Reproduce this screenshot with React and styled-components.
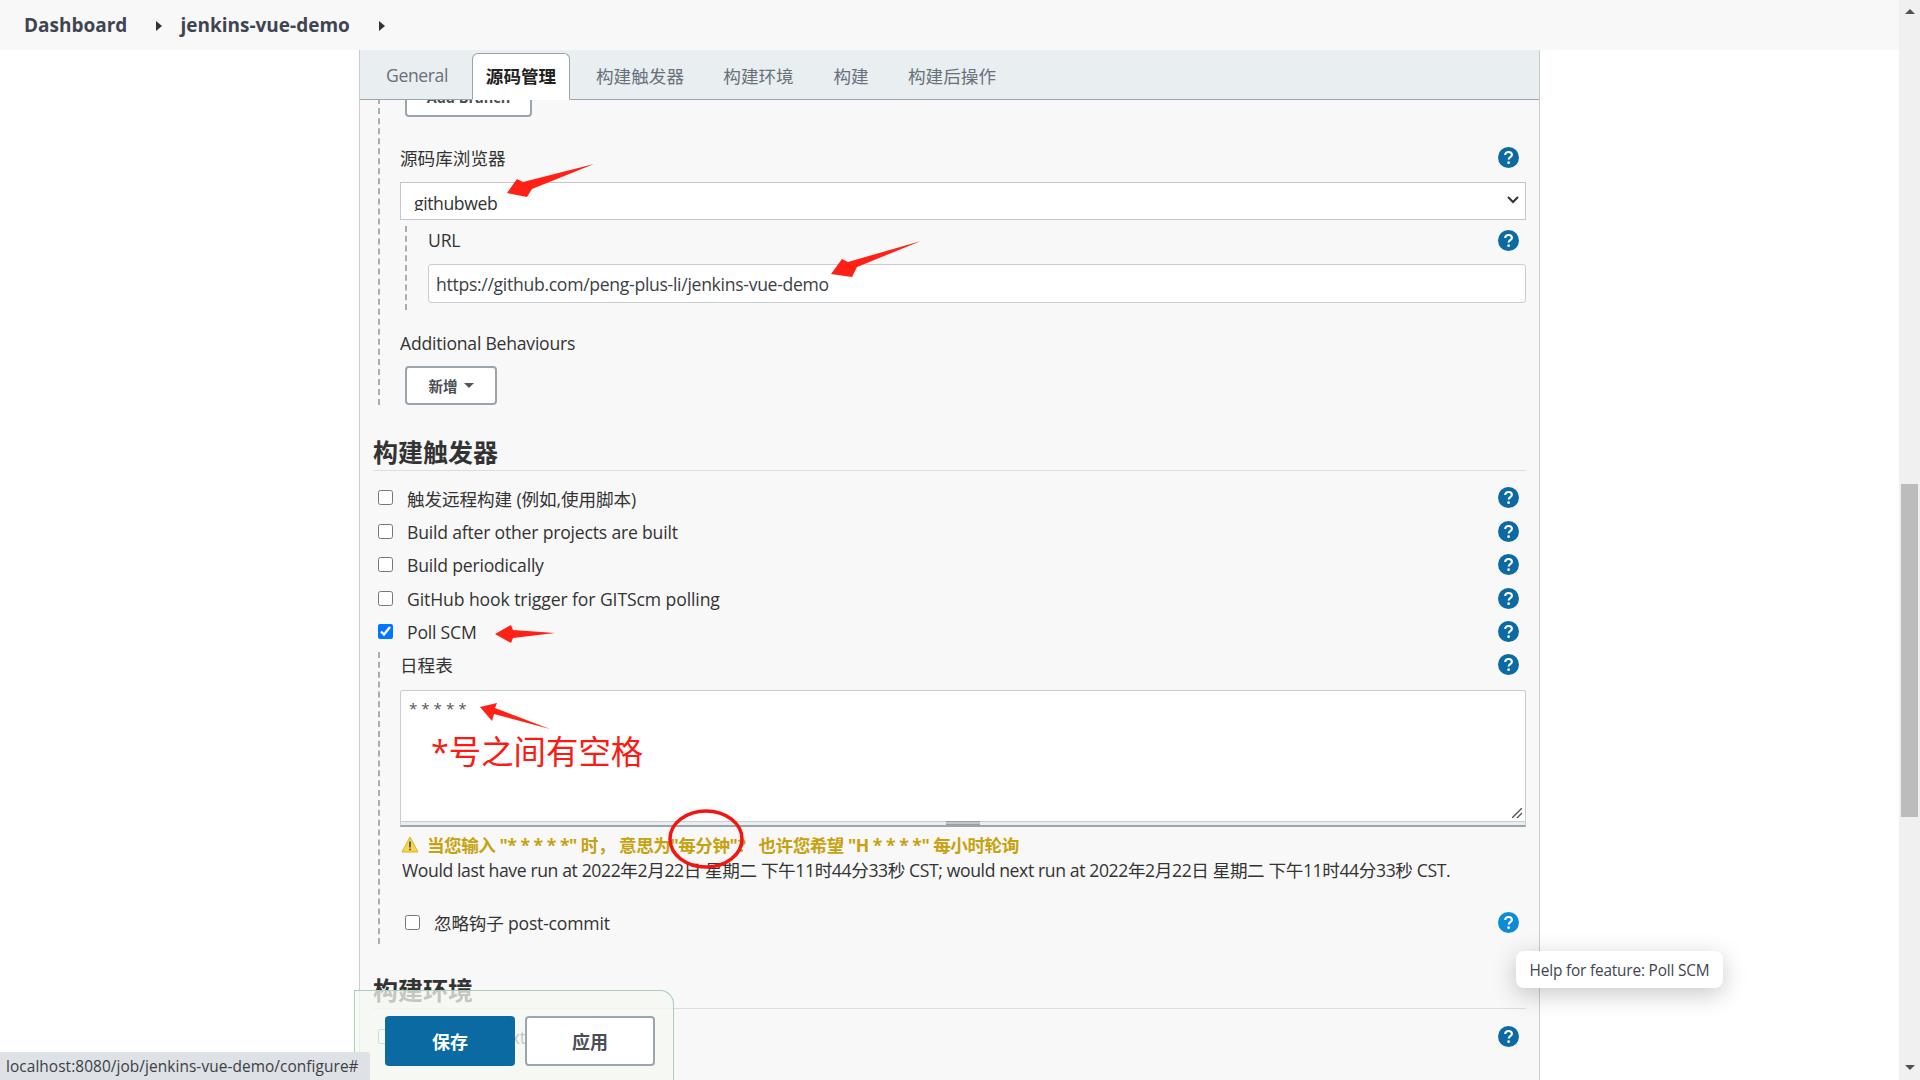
import React from 'react';
import styled, { createGlobalStyle } from 'styled-components';

const Global = createGlobalStyle`
  html, body { margin: 0; padding: 0; height: 100%; overflow: hidden; background: #fff; }
  body { font-family: "Open Sans", "Noto Sans CJK SC", sans-serif; font-size: 17.6px; color: #333; }
  * { box-sizing: border-box; }
`;

const Page = styled.div`
  position: relative; width: 1920px; height: 1080px; overflow: hidden;
  display: grid; grid-template-columns: 1fr 21px;
`;
const Main = styled.div`display: flex; flex-direction: column; height: 1080px; min-width: 0;`;
const TopBar = styled.header`
  flex: none; height: 50px; background: #f8f8f8; display: flex; align-items: center; padding-left: 24px;
`;
const Crumb = styled.a`font-weight: 700; font-size: 19px; color: #3f4550; letter-spacing: 0;`;
const CrumbCaret = styled.svg`width: 6px; height: 10px; fill: #333; margin: 1px ${p => p.$r}px 0 ${p => p.$l}px;`;

const Body = styled.div`flex: 1; min-height: 0; padding-left: 359px;`;
const Panel = styled.main`
  width: 1181px; height: 100%; background: #f8f8f8; border: solid #ccc; border-width: 0 1px;
  display: flex; flex-direction: column; overflow: hidden;
`;
const Tabs = styled.nav`
  flex: none; height: 50px; background: #e9eef1; border-bottom: 1px solid #9aa5ae; display: flex; align-items: flex-end; position: relative;
`;
const Tab = styled.a`
  height: 47px; margin-bottom: -1px; padding-bottom: 3px; display: flex; align-items: center; justify-content: center; white-space: nowrap;
  width: ${p => p.$w}px; margin-left: ${p => p.$m}px; color: ${p => p.$active ? '#222' : '#68707a'};
  font-weight: ${p => p.$active ? 700 : 400}; letter-spacing: ${p => p.$ls || 0}px;
  ${p => p.$active ? 'background:#fff;border:1px solid #9aa5ae;border-bottom:1px solid #fff;border-radius:6px 6px 0 0;' : ''}
`;
const Scroller = styled.div`flex: 1; min-height: 0; overflow: hidden;`;
const Content = styled.div`margin-top: -22px; padding: 0 13px 0 13px;`;
const Dashed = styled.div`
  margin-left: 5px; border-left: 2px dashed #a9adb1; padding-left: 20px;
  padding-bottom: ${p => p.$pb || 0}px; margin-top: ${p => p.$mt || 0}px;
`;
const Nested = styled.div`
  margin: 6px 0 0 5px; border-left: 2px dashed #a9adb1; padding: 0 0 7px 21px;
`;
const OutlineBtn = styled.button`
  display: flex; align-items: center; justify-content: center; gap: 6px;
  height: 39px; width: ${p => p.$w}px; margin-left: 5px; margin-top: ${p => p.$mt || 0}px;
  background: #fff; border: 2px solid #9aa5ae; border-radius: 4px; font: 700 14.5px "Open Sans", "Noto Sans CJK SC", sans-serif; color: #4a4f55; padding: 0;
`;
const Caret = styled.span`
  width: 0; height: 0; border: 5px solid transparent; border-top-color: #555; border-bottom: 0;
`;
const LabelRow = styled.div`
  display: flex; align-items: center; justify-content: space-between; height: ${p => p.$h || 30}px;
  margin-top: ${p => p.$mt || 0}px; padding-right: 7px; letter-spacing: ${p => p.$ls || 0}px;
`;
const SelectBox = styled.div`
  height: 38px; margin-top: 10px; background: #fff; border: 1px solid #c4c6c8; position: relative; padding: 9px 0 0 13px;
`;
const SelectValue = styled.span`display: block; height: 19px; overflow: hidden; line-height: 22px; width: 100px; letter-spacing: -0.4px;`;
const Chevron = styled.svg`position: absolute; right: 6px; top: 13px; width: 12px; height: 8px; fill: none; stroke: #333; stroke-width: 2;`;
const TextInput = styled.div`
  height: 39px; margin-top: 10px; background: #fff; border: 1px solid #c9cdd0; border-radius: 3px; display: flex; align-items: center; padding-left: 7px; letter-spacing: -0.3px; color: #3a3f46;
`;
const SectionTitle = styled.h2`
  margin: ${p => p.$mt}px 0 0; height: 35px; font-size: 25px; line-height: 32px; font-weight: 700; color: #333; border-bottom: 1px solid #ddd;
`;
const Rows = styled.div`margin-top: ${p => p.$mt || 10}px;`;
const Row = styled.div`
  display: flex; align-items: center; height: ${p => p.$h || 33.5}px; padding-left: ${p => p.$pl ?? 5}px; padding-right: 7px; color: #333;
`;
const Check = styled.input`width: 15px; height: 15px; margin: 0 14px 0 0; flex: none; accent-color: #0075ff;`;
const RowLabel = styled.span`flex: 1; padding-top: 1px; letter-spacing: ${p => p.$ls ?? -0.2}px; white-space: nowrap;`;
const Schedule = styled.div`margin-top: 13px; position: relative;`;
const CronArea = styled.textarea`
  display: block; width: 100%; height: 131px; background: #fff; border: 1px solid #c9cdd0; border-bottom: 0; border-radius: 3px 3px 0 0; padding: 7px 8px;
  font: 15.2px/20px "Open Sans", sans-serif; color: #555; resize: none; outline: none;
`;
const ResizeMark = styled.svg`
  position: absolute; right: 4px; bottom: 9px; width: 10px; height: 10px; stroke: #555; stroke-width: 1.4; fill: none; pointer-events: none;
`;
const Grippie = styled.div`
  height: 6px; background: #e9eef1; border: 1px solid #c9cdd0; border-top: 1px solid #c9cdd0; border-bottom: 2px solid #9aa5ae; display: flex; justify-content: center;
`;
const Grip = styled.span`width: 34px; height: 4px; margin-top: -1px; border-top: 1px solid #9a9fa3; border-bottom: 1px solid #9a9fa3; background: #c3c6c8;`;
const Warning = styled.div`
  height: 24px; margin-top: 5px; display: flex; align-items: center; gap: 8px; margin-left: 1px; font-weight: 700; color: #c7a20f; letter-spacing: -0.5px; white-space: nowrap;
`;
const NextRun = styled.div`height: 24px; margin: 2px 0 0 2px; line-height: 24px; white-space: nowrap; letter-spacing: -0.39px; color: #333;`;

const ScrollBar = styled.aside`background: #f0f0f0; position: relative; display: flex; flex-direction: column; align-items: center;`;
const ScrollArrow = styled.span`
  width: 0; height: 0; border: 5px solid transparent; margin-top: ${p => p.$mt}px; ${p => p.$up ? 'border-bottom-color:#505050;border-top:0;' : 'border-top-color:#505050;border-bottom:0;'}
`;
const Thumb = styled.div`width: 17px; height: 333px; margin-top: 470px; background: #bcbcbc; flex: none;`;

const Tooltip = styled.div`
  position: absolute; left: 1516px; top: 951px; width: 207px; height: 37px; padding-top: 1px; background: #fff; border-radius: 8px;
  box-shadow: 0 6px 24px rgba(0,0,0,.22); display: flex; align-items: center; justify-content: center; font-size: 15.4px; color: #3f4550; letter-spacing: -0.18px; white-space: nowrap;
`;
const StatusBar = styled.div`
  position: absolute; left: 0; bottom: 0; width: 370px; height: 28px; background: #dee1e6; border-radius: 0 3px 0 0; padding-left: 6px; line-height: 30px; font-size: 15.4px; color: #3c4043; white-space: nowrap; letter-spacing: 0.08px;
`;
const BottomBar = styled.div`
  position: absolute; left: 354px; top: 990px; width: 320px; height: 90px; background: rgba(245,248,243,.75); border: 1px solid #a9cdb6; border-bottom: 0; border-radius: 0 14px 0 0;
  display: flex; gap: 10px; padding: 25px 0 0 30px; align-items: flex-start;
`;
const SaveBtn = styled.button`
  width: 130px; height: 50px; border: 0; border-radius: 4px; background: #0b6aa2; color: #fff; font: 700 18px "Open Sans", "Noto Sans CJK SC", sans-serif;
`;
const ApplyBtn = styled.button`
  width: 130px; height: 50px; border: 2px solid #9aa5ae; border-radius: 4px; background: #fff; color: #4a4f55; font: 700 18px "Open Sans", "Noto Sans CJK SC", sans-serif;
`;
const Marks = styled.svg`position: absolute; left: 0; top: 0; width: 1920px; height: 1080px; pointer-events: none;`;
const RedNote = styled.div`
  position: absolute; left: 431px; top: 727px; font-size: 32.4px; line-height: 48px; color: #fb1a14; white-space: nowrap; font-weight: 400;
`;

const HelpSvg = styled.svg`width: 21px; height: 21px; flex: none; display: block;`;
const Help = ({ light }) => (
  <HelpSvg viewBox="0 0 21 21">
    <circle cx="10.5" cy="10.5" r="10.5" fill={light ? '#0d8bd6' : '#0b6aa2'} />
    <path d="M7.2 8.1c0-1.9 1.4-3.1 3.4-3.1s3.3 1.1 3.3 2.8c0 2.4-3.2 2.4-3.2 4.7" fill="none" stroke="#fff" strokeWidth="2.1" />
    <circle cx="10.6" cy="15.7" r="1.35" fill="#fff" />
  </HelpSvg>
);

const checks = [
  ['触发远程构建 (例如,使用脚本)', false, -0.1],
  ['Build after other projects are built', false],
  ['Build periodically', false],
  ['GitHub hook trigger for GITScm polling', false, -0.1],
  ['Poll SCM', true],
];

export default function App() {
  return (
    <Page>
      <Global />
      <Main>
        <TopBar>
          <Crumb>Dashboard</Crumb>
          <CrumbCaret $l={29} $r={18} viewBox="0 0 6 10"><path d="M0 0l6 5-6 5z" /></CrumbCaret>
          <Crumb>jenkins-vue-demo</Crumb>
          <CrumbCaret $l={29} $r={0} viewBox="0 0 6 10"><path d="M0 0l6 5-6 5z" /></CrumbCaret>
        </TopBar>
        <Body>
          <Panel>
            <Tabs>
              <Tab $w={60} $m={27} $ls={-0.4}>General</Tab>
              <Tab $active $w={98} $m={25}>源码管理</Tab>
              <Tab $w={88} $m={26}>构建触发器</Tab>
              <Tab $w={71} $m={39}>构建环境</Tab>
              <Tab $w={36} $m={39}>构建</Tab>
              <Tab $w={88} $m={39}>构建后操作</Tab>
            </Tabs>
            <Scroller>
              <Content>
                <Dashed>
                  <OutlineBtn $w={127}>Add Branch</OutlineBtn>
                  <LabelRow $mt={25}>源码库浏览器<Help /></LabelRow>
                  <SelectBox>
                    <SelectValue>githubweb</SelectValue>
                    <Chevron viewBox="0 0 12 8"><path d="M1 1l5 5 5-5" /></Chevron>
                  </SelectBox>
                  <Nested>
                    <LabelRow $h={28} $ls={-0.2}><span>URL</span><Help /></LabelRow>
                    <TextInput>https://github.com/peng-plus-li/jenkins-vue-demo</TextInput>
                  </Nested>
                  <LabelRow $mt={18} $ls={-0.23}><span>Additional Behaviours</span></LabelRow>
                  <OutlineBtn $w={92} $mt={8}>新增<Caret /></OutlineBtn>
                </Dashed>
                <SectionTitle $mt={31}>构建触发器</SectionTitle>
                <Rows>
                  {checks.map(([text, on, ls]) => (
                    <Row key={text}>
                      <Check type="checkbox" readOnly checked={on} />
                      <RowLabel $ls={ls}>{text}</RowLabel>
                      <Help />
                    </Row>
                  ))}
                </Rows>
                <Dashed $mt={3.5} $pb={5}>
                  <LabelRow $h={25}>日程表<Help /></LabelRow>
                  <Schedule>
                    <CronArea readOnly value="* * * * *" />
                    <ResizeMark viewBox="0 0 10 10"><path d="M0 10L10 0M5 10l5-5" /></ResizeMark>
                    <Grippie><Grip /></Grippie>
                  </Schedule>
                  <Warning>
                    <svg width="18" height="17" viewBox="0 0 18 17">
                      <path d="M9 1l8 15H1z" fill="#f7d64a" stroke="#d5b42c" strokeLinejoin="round" />
                      <path d="M9 5.5v6" stroke="#555" strokeWidth="1.8" />
                      <circle cx="9" cy="13.6" r="1" fill="#555" />
                    </svg>
                    当您输入 "* * * * *" 时， 意思为"每分钟"？ 也许您希望 "H * * * *" 每小时轮询
                  </Warning>
                  <NextRun>Would last have run at 2022年2月22日 星期二 下午11时44分33秒 CST; would next run at 2022年2月22日 星期二 下午11时44分33秒 CST.</NextRun>
                  <Rows $mt={23}>
                    <Row $h={34} $pl={5}>
                      <Check type="checkbox" readOnly checked={false} />
                      <RowLabel>忽略钩子 post-commit</RowLabel>
                      <Help light />
                    </Row>
                  </Rows>
                </Dashed>
                <SectionTitle $mt={30}>构建环境</SectionTitle>
                <Rows $mt={11}>
                  <Row>
                    <Check type="checkbox" readOnly checked={false} />
                    <RowLabel>Use secret text(s) or file(s)</RowLabel>
                    <Help />
                  </Row>
                </Rows>
              </Content>
            </Scroller>
          </Panel>
        </Body>
      </Main>
      <ScrollBar>
        <ScrollArrow $up $mt={9} />
        <Thumb />
        <ScrollArrow $mt={248} />
      </ScrollBar>

      <BottomBar>
        <SaveBtn>保存</SaveBtn>
        <ApplyBtn>应用</ApplyBtn>
      </BottomBar>
      <StatusBar>localhost:8080/job/jenkins-vue-demo/configure#</StatusBar>
      <Tooltip>Help for feature: Poll SCM</Tooltip>
      <Marks viewBox="0 0 1920 1080">
        <g fill="#ff2016">
          <polygon points="594,164 532,189 527,197 507,193 517,179 523,182" />
          <polygon points="921,241 857,267 852,277 831,274 842,259 848,262" />
          <polygon points="555,633 513,638 511,643 495,634 511,625 513,630" />
          <polygon points="550,729 494,714 492,721 480,707 497,703 495,708" />
        </g>
        <ellipse cx="706" cy="839" rx="36" ry="28" fill="none" stroke="#f5140f" strokeWidth="3.5" />
      </Marks>
      <RedNote>*号之间有空格</RedNote>
    </Page>
  );
}
